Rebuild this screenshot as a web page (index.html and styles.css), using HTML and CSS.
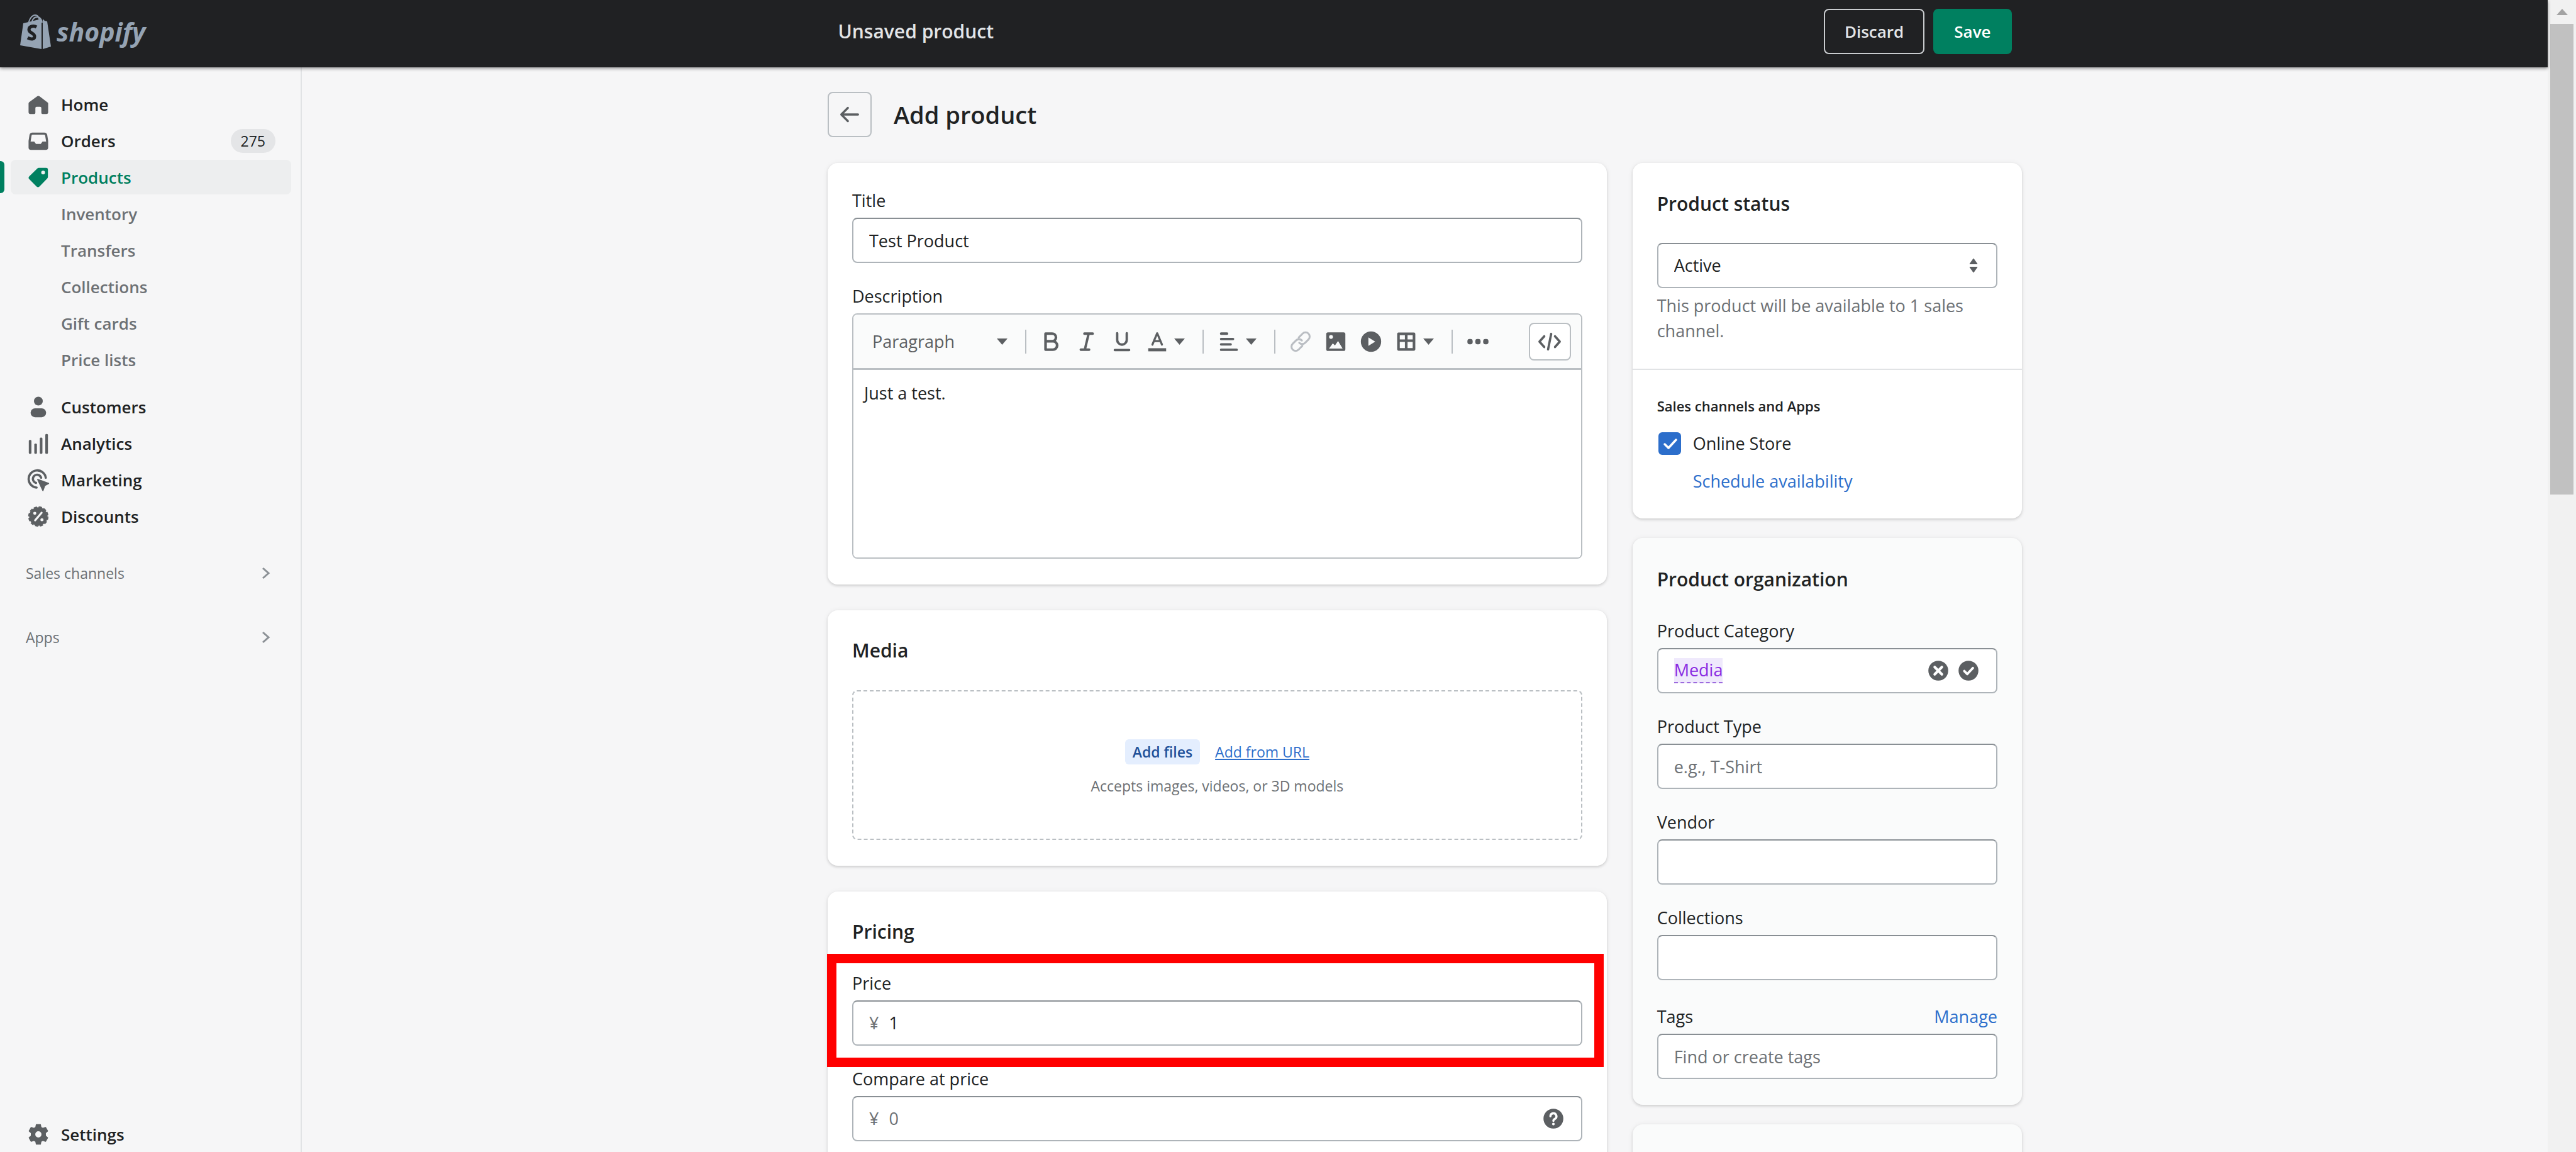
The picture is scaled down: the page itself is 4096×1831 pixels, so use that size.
FILE: index.html
```html
<!DOCTYPE html>
<html lang="en">
<head>
  <meta charset="UTF-8">
  <meta name="viewport" content="width=device-width, initial-scale=1.0">
  <title>Add product</title>
  <link rel="stylesheet" href="styles.css">
</head>
<body>
  <div class="window">
    <div class="app">
      <header class="topbar">
        <a class="logo" href="#">
          <svg class="logo-bag" viewBox="0 0 49 57">
            <path d="M13 19C14 9 19 3 24 3c5 0 7 5 7 14M18 18C19 10 22 6 27 6c4 0 7 3 8 9" fill="none" stroke="#95a3b3" stroke-width="2"/>
            <path d="M5 16 34 9v48L0 51Z" fill="#95a3b3"/>
            <path d="M36 9l3 3 4 1 6 40-13 4Z" fill="#95a3b3"/>
            <path d="M26 22c-5-3-12-1-12 4 0 6 9 5 9 11 0 5-6 5-11 2" fill="none" stroke="#202123" stroke-width="5"/>
          </svg>
          <span class="logo-name">shopify</span>
        </a>
        <div class="topbar-main">
          <div class="topbar-content">
            <h2 class="topbar-title">Unsaved product</h2>
            <div class="topbar-actions">
              <button type="button" class="btn btn-dark">Discard</button>
              <button type="submit" form="product" class="btn btn-primary">Save</button>
            </div>
          </div>
        </div>
      </header>

      <div class="body">
        <nav class="sidebar">
          <ul class="nav">
            <li><a class="nav-item" href="#">
              <svg class="icon" viewBox="0 0 20 20"><path d="M18 8.6 11.3 3.4a2 2 0 0 0-2.6 0L2.4 8a1.5 1.5 0 0 0-.6 1.2V16.500A1.500 1.500 0 0 0 3.300 18H6.500a1 1 0 0 0 1-1V13a1 1 0 0 1 1-1h3a1 1 0 0 1 1 1v4a1 1 0 0 0 1 1h3.200a1.500 1.500 0 0 0 1.500-1.500V9.200Z"/></svg>
              Home</a></li>
            <li><a class="nav-item" href="#">
              <svg class="icon" viewBox="0 0 20 20"><path fill-rule="evenodd" d="M5 3h10a2.500 2.500 0 0 1 2.400 1.900L18.200 10v5.500a2 2 0 0 1-2 2H3.800a2 2 0 0 1-2-2V10l.8-5.100A2.500 2.500 0 0 1 5 3Zm.2 1.700a.9.9 0 0 0-.9.800L3.500 10.500H6.500l1.500 2h4l1.500-2h3l-.8-5a.9.9 0 0 0-.9-.8Z"/></svg>
              Orders <span class="badge">275</span></a></li>
            <li><a class="nav-item active" href="#">
              <svg class="icon" viewBox="0 0 20 20"><path fill-rule="evenodd" d="M10.500 2H16.500A1.500 1.500 0 0 1 18 3.500V9.500a2 2 0 0 1-.6 1.400l-6.500 6.700a1.700 1.700 0 0 1-2.400 0L2.400 11.500a1.700 1.700 0 0 1 0-2.400L9 2.600A2 2 0 0 1 10.500 2ZM14 4.300a1.600 1.600 0 1 0 0 3.200 1.600 1.600 0 0 0 0-3.200Z"/></svg>
              Products</a></li>
            <li><a class="nav-item sub" href="#">Inventory</a></li>
            <li><a class="nav-item sub" href="#">Transfers</a></li>
            <li><a class="nav-item sub" href="#">Collections</a></li>
            <li><a class="nav-item sub" href="#">Gift cards</a></li>
            <li><a class="nav-item sub" href="#">Price lists</a></li>
          </ul>
          <ul class="nav">
            <li><a class="nav-item" href="#">
              <svg class="icon" viewBox="0 0 20 20"><circle cx="10" cy="5" r="3.700"/><rect x="3.500" y="11" width="13" height="7.500" rx="3.700"/></svg>
              Customers</a></li>
            <li><a class="nav-item" href="#">
              <svg class="icon" viewBox="0 0 20 20"><rect x="2" y="7" width="2.200" height="11.500" rx=".8"/><rect x="6.600" y="10" width="2.200" height="8.500" rx=".8"/><rect x="11.200" y="5" width="2.200" height="13.500" rx=".8"/><rect x="15.800" y="2" width="2.200" height="16.500" rx=".8"/></svg>
              Analytics</a></li>
            <li><a class="nav-item" href="#">
              <svg class="icon" viewBox="0 0 20 20"><path d="M16.200 8A7.200 7.200 0 1 0 8.500 16.300M12.300 8A3.500 3.500 0 1 0 8 12.400" fill="none" stroke="currentColor" stroke-width="1.900" stroke-linecap="round"/><path d="M9.500 9.500 18.500 12.800 15.300 14.600 13.800 18.800Z" stroke="currentColor" stroke-linejoin="round"/></svg>
              Marketing</a></li>
            <li><a class="nav-item" href="#">
              <svg class="icon" viewBox="0 0 20 20"><circle cx="10" cy="10" r="7.700"/><circle cx="10" cy="10" r="8" fill="none" stroke="currentColor" stroke-width="1" stroke-dasharray="2.800 1.390"/><path d="M7.300 13.200 12.700 6.800" stroke="#f6f6f7" stroke-width="1.700" stroke-linecap="round"/><circle cx="7" cy="7.300" r="1.300" fill="#f6f6f7"/><circle cx="13" cy="12.700" r="1.300" fill="#f6f6f7"/></svg>
              Discounts</a></li>
          </ul>
          <a class="nav-section" href="#">Sales channels <svg class="chevron" viewBox="0 0 14 20"><path d="M2 2l9 8-9 8"/></svg></a>
          <a class="nav-section" href="#">Apps <svg class="chevron" viewBox="0 0 14 20"><path d="M2 2l9 8-9 8"/></svg></a>
          <a class="nav-item settings" href="#">
            <svg class="icon" viewBox="0 0 20 20"><path fill-rule="evenodd" d="M8.300 1.800h3.400l.5 2.300 1.500.9 2.300-.8 1.700 3-1.800 1.600v2.400l1.800 1.600-1.700 3-2.300-.8-1.500.9-.5 2.300H8.300l-.5-2.300-1.500-.9-2.300.8-1.700-3 1.800-1.600V8.800L2.300 7.200l1.700-3 2.300.8 1.500-.9ZM10 7a3 3 0 1 0 0 6 3 3 0 0 0 0-6Z" stroke="currentColor" stroke-width=".8" stroke-linejoin="round"/></svg>
            Settings</a>
        </nav>

        <main class="main">
          <form class="page" id="product">
            <div class="page-header">
              <button type="button" class="btn-back" aria-label="Back">
                <svg class="icon" viewBox="0 0 20 20"><path d="M17 10H3.500M8.500 4.500 3 10l5.500 5.500" fill="none" stroke="currentColor" stroke-width="1.800" stroke-linecap="round" stroke-linejoin="round"/></svg>
              </button>
              <h1>Add product</h1>
            </div>

            <div class="layout">
              <div class="column">
                <section class="card card-details">
                  <div class="field">
                    <label for="title">Title</label>
                    <input type="text" class="input" id="title" value="Test Product">
                  </div>
                  <div class="field">
                    <label for="description">Description</label>
                    <div class="editor">
                      <div class="toolbar">
                        <div class="format">
                          <select aria-label="Formatting"><option>Paragraph</option></select>
                          <svg class="caret" viewBox="0 0 17 10"><path d="M0 0h17L8.500 10Z"/></svg>
                        </div>
                        <span class="divider"></span>
                        <button type="button" class="tool" aria-label="Bold"><svg class="icon" viewBox="0 0 20 20"><path d="M5 3.300h5.500a3.200 3.200 0 0 1 0 6.400H5Zm0 6.400h6.200a3.500 3.500 0 0 1 0 7H5Z" fill="none" stroke="currentColor" stroke-width="2.200" stroke-linejoin="round"/></svg></button>
                        <button type="button" class="tool" aria-label="Italic"><svg class="icon" viewBox="0 0 20 20"><path d="M8 3.300h7M5 16.700h7M11.600 3.300 8.400 16.700" fill="none" stroke="currentColor" stroke-width="2" stroke-linecap="round"/></svg></button>
                        <button type="button" class="tool" aria-label="Underline"><svg class="icon" viewBox="0 0 20 20"><path d="M6 3v5.500a4 4 0 0 0 8 0V3M4 17h12" fill="none" stroke="currentColor" stroke-width="2" stroke-linecap="round"/></svg></button>
                        <button type="button" class="tool tool-menu" aria-label="Color"><svg class="icon" viewBox="0 0 20 20"><path d="M6 12.500 10 3l4 9.500M7.500 9.500h5" fill="none" stroke="currentColor" stroke-width="1.700" stroke-linecap="round" stroke-linejoin="round"/><rect x="2.500" y="15.500" width="15" height="2.600"/></svg><svg class="caret" viewBox="0 0 17 10"><path d="M0 0h17L8.500 10Z"/></svg></button>
                        <span class="divider"></span>
                        <button type="button" class="tool tool-menu" aria-label="Alignment"><svg class="icon" viewBox="0 0 20 20"><path d="M3.500 3.300h5M3.500 7.800h10M3.500 12.300h8M3.500 16.800h13" stroke="currentColor" stroke-width="2" stroke-linecap="round"/></svg><svg class="caret" viewBox="0 0 17 10"><path d="M0 0h17L8.500 10Z"/></svg></button>
                        <span class="divider"></span>
                        <button type="button" class="tool disabled" aria-label="Link"><svg class="icon" viewBox="0 0 20 20"><path d="m8.500 6.500 3.200-3.200a3.400 3.400 0 0 1 4.900 4.900l-2.800 2.800a3.400 3.400 0 0 1-4.900 0M11.500 13.500l-3.200 3.200a3.400 3.400 0 0 1-4.900-4.900L6.200 9a3.400 3.400 0 0 1 4.900 0" fill="none" stroke="currentColor" stroke-width="1.600" stroke-linecap="round"/></svg></button>
                        <button type="button" class="tool" aria-label="Image"><svg class="icon" viewBox="0 0 20 20"><path fill-rule="evenodd" d="M3.500 2.200h13A1.500 1.500 0 0 1 18 3.700v12.600a1.500 1.500 0 0 1-1.500 1.500h-13A1.500 1.500 0 0 1 2 16.300V3.700a1.500 1.500 0 0 1 1.500-1.500ZM6 4.500a1.600 1.600 0 1 0 0 3.200 1.600 1.600 0 0 0 0-3.200ZM4.300 15.800h11.400l-3.800-6.300-2.600 3.700L7.500 11.500Z"/></svg></button>
                        <button type="button" class="tool" aria-label="Video"><svg class="icon" viewBox="0 0 20 20"><path fill-rule="evenodd" d="M10 1.500a8.500 8.500 0 1 0 0 17 8.500 8.500 0 0 0 0-17ZM7.800 6.500v7l5.700-3.500Z"/></svg></button>
                        <button type="button" class="tool tool-menu" aria-label="Table"><svg class="icon" viewBox="0 0 20 20"><path d="M3.500 3.500h13v13h-13ZM10 3.500v13M3.500 9.200h13" fill="none" stroke="currentColor" stroke-width="2.200" stroke-linejoin="round"/></svg><svg class="caret" viewBox="0 0 17 10"><path d="M0 0h17L8.500 10Z"/></svg></button>
                        <span class="divider"></span>
                        <button type="button" class="tool" aria-label="More"><svg class="icon" viewBox="0 0 20 20"><rect x="1.200" y="7.800" width="4.400" height="4.400" rx="1.800"/><rect x="7.800" y="7.800" width="4.400" height="4.400" rx="1.800"/><rect x="14.400" y="7.800" width="4.400" height="4.400" rx="1.800"/></svg></button>
                        <button type="button" class="btn-code" aria-label="Show HTML"><svg class="icon" viewBox="0 0 20 20"><path d="M5.500 5.500 1.500 10l4 4.500M14.500 5.500l4 4.500-4 4.500M11.300 3.500 8.700 16.500" fill="none" stroke="currentColor" stroke-width="1.900" stroke-linecap="round" stroke-linejoin="round"/></svg></button>
                      </div>
                      <textarea id="description">Just a test.</textarea>
                    </div>
                  </div>
                </section>

                <section class="card">
                  <h2>Media</h2>
                  <div class="dropzone">
                    <div class="dropzone-actions">
                      <button type="button" class="btn-files">Add files</button>
                      <a class="link-url" href="#">Add from URL</a>
                    </div>
                    <p>Accepts images, videos, or 3D models</p>
                  </div>
                </section>

                <section class="card">
                  <h2>Pricing</h2>
                  <div class="field highlight">
                    <label for="price">Price</label>
                    <div class="input input-group">
                      <span class="prefix">¥</span>
                      <input type="text" id="price" value="1">
                    </div>
                  </div>
                  <div class="field">
                    <label for="compare">Compare at price</label>
                    <div class="input input-group">
                      <span class="prefix">¥</span>
                      <input type="text" id="compare" placeholder="0">
                      <svg class="icon" viewBox="0 0 20 20"><circle cx="10" cy="10" r="8.300"/><path d="M7.500 8a2.500 2.500 0 1 1 3.700 2.200c-.8.400-1.200.8-1.200 1.600" fill="none" stroke="#fff" stroke-width="1.800" stroke-linecap="round"/><circle cx="10" cy="14.500" r="1.100" fill="#fff"/></svg>
                    </div>
                  </div>
                </section>
              </div>

              <div class="column column-side">
                <section class="card card-status">
                  <div class="card-section">
                    <h2>Product status</h2>
                    <div class="select">
                      <select class="input" aria-label="Product status"><option>Active</option></select>
                      <svg class="select-icon" viewBox="0 0 14 22"><path d="M7 0l6 8.500H1ZM7 22 1 13.500h12Z" stroke="currentColor" stroke-linejoin="round"/></svg>
                    </div>
                    <p class="help">This product will be available to 1 sales channel.</p>
                  </div>
                  <div class="card-section channels">
                    <h3>Sales channels and Apps</h3>
                    <label class="check"><input type="checkbox" checked> Online Store</label>
                    <a class="link" href="#">Schedule availability</a>
                  </div>
                </section>

                <section class="card card-subdued">
                  <h2>Product organization</h2>
                  <div class="field">
                    <label for="category">Product Category</label>
                    <div class="input input-group">
                      <span class="token" id="category" role="textbox" tabindex="0">Media</span>
                      <svg class="icon" viewBox="0 0 20 20"><circle cx="10" cy="10" r="8.300"/><path d="m7 7 6 6M13 7l-6 6" stroke="#fff" stroke-width="2.200" stroke-linecap="round"/></svg>
                      <svg class="icon" viewBox="0 0 20 20"><circle cx="10" cy="10" r="8.300"/><path d="m6.500 10.300 2.500 2.500 4.700-5" fill="none" stroke="#fff" stroke-width="2" stroke-linecap="round" stroke-linejoin="round"/></svg>
                    </div>
                  </div>
                  <div class="field">
                    <label for="type">Product Type</label>
                    <input type="text" class="input" id="type" placeholder="e.g., T-Shirt">
                  </div>
                  <div class="field">
                    <label for="vendor">Vendor</label>
                    <input type="text" class="input" id="vendor">
                  </div>
                  <div class="field">
                    <label for="collections">Collections</label>
                    <input type="text" class="input" id="collections">
                  </div>
                  <div class="field field-tags">
                    <div class="label-row">
                      <label for="tags">Tags</label>
                      <a class="link" href="#">Manage</a>
                    </div>
                    <input type="text" class="input" id="tags" placeholder="Find or create tags">
                  </div>
                </section>

                <section class="card card-subdued"></section>
              </div>
            </div>
          </form>
        </main>
      </div>
    </div>

    <div class="scrollbar">
      <svg class="scroll-arrow" viewBox="0 0 18 10"><path d="M0 10h18L9 0Z"/></svg>
      <div class="scroll-thumb"></div>
    </div>
  </div>
</body>
</html>
```
FILE: styles.css
```css
* {
  box-sizing: border-box;
}
body {
  margin: 0;
  font-family: "Open Sans", "Noto Sans", sans-serif;
  font-size: 27px;
  line-height: 38px;
  color: #202223;
  background-color: #f6f6f7;
}
h1, h2, h3, p, ul {
  margin: 0;
  padding: 0;
}
h2 {
  font-size: 30px;
  font-weight: 600;
}
button, input, select, textarea {
  font: inherit;
  color: inherit;
}
button {
  padding: 0;
  cursor: pointer;
}
a {
  color: #2c6ecb;
  text-decoration: none;
}
svg {
  display: block;
  flex: none;
  fill: currentColor;
}
.icon {
  width: 38px;
  height: 38px;
  color: #5c5f62;
}
.window {
  display: grid;
  grid-template-columns: minmax(0, 1fr) 45px;
  height: 100vh;
  overflow: hidden;
}
.app {
  display: flex;
  flex-direction: column;
  min-height: 0;
}

/* Top bar */
.topbar {
  display: flex;
  flex: none;
  height: 107px;
  background-color: #202123;
  box-shadow: 0 2px 5px rgba(0, 0, 0, 0.4);
  z-index: 1;
}
.logo {
  display: flex;
  align-items: center;
  gap: 9px;
  width: 480px;
  padding: 0 0 8px 32px;
  color: #95a3b3;
}
.logo-bag {
  width: 49px;
  height: 57px;
}
.logo-name {
  font-size: 41px;
  font-weight: 700;
  font-style: italic;
}
.topbar-main {
  flex: 1;
  padding: 0 16px;
}
.topbar-content {
  display: flex;
  justify-content: space-between;
  align-items: center;
  max-width: 1866px;
  height: 99px;
  margin: 0 auto;
  color: #e3e5e7;
}
.topbar-actions {
  display: flex;
  gap: 14px;
}
.btn {
  height: 72px;
  padding: 0 31px;
  border: 2px solid #c9cccf;
  border-radius: 8px;
  font-size: 26px;
  font-weight: 600;
}
.btn-dark {
  background-color: transparent;
  color: #e3e5e7;
}
.btn-primary {
  border-color: #008060;
  background-color: #008060;
  color: #fff;
}

/* Sidebar */
.body {
  display: flex;
  flex: 1;
  min-height: 0;
}
.sidebar {
  display: flex;
  flex-direction: column;
  flex: none;
  width: 480px;
  padding: 31px 0 1px;
  border-right: 2px solid #e1e3e5;
}
.nav {
  display: flex;
  flex-direction: column;
  gap: 3px;
  list-style: none;
  margin-bottom: 20px;
}
.nav + .nav {
  margin-bottom: 12px;
}
.nav-item {
  display: flex;
  align-items: center;
  gap: 17px;
  position: relative;
  height: 55px;
  margin: 0 15px 0 17px;
  padding: 0 25px;
  border-radius: 8px;
  font-size: 26px;
  font-weight: 600;
  color: #202223;
}
.nav-item.active {
  background-color: #edeeef;
  color: #008060;
}
.nav-item.active .icon {
  color: #008060;
}
.nav-item.active::before {
  content: "";
  position: absolute;
  left: -17px;
  top: 2px;
  width: 7px;
  height: 51px;
  border-radius: 0 6px 6px 0;
  background-color: #008060;
}
.nav-item.sub {
  padding-left: 80px;
  color: #6d7175;
}
.badge {
  margin-left: auto;
  padding: 0 16px;
  border-radius: 19px;
  background-color: #e4e5e7;
  font-size: 23px;
  font-weight: 400;
}
.nav-section {
  display: flex;
  justify-content: space-between;
  align-items: center;
  height: 102px;
  padding: 0 48px 0 41px;
  font-size: 23px;
  color: #6d7175;
}
.nav-section .chevron {
  width: 14px;
  height: 20px;
  fill: none;
  stroke: #8c9196;
  stroke-width: 3;
}
.settings {
  margin-top: auto;
}

/* Page */
.main {
  flex: 1;
  min-width: 0;
  overflow: hidden;
}
.page {
  max-width: 1899px;
  margin: 0 auto;
  padding-top: 39px;
}
.page-header {
  display: flex;
  align-items: center;
  gap: 35px;
  margin-bottom: 41px;
}
.page-header h1 {
  font-size: 38px;
  font-weight: 600;
}
.btn-back {
  display: flex;
  justify-content: center;
  align-items: center;
  width: 70px;
  height: 72px;
  border: 2px solid #babfc3;
  border-radius: 8px;
  background: none;
}
.layout {
  display: grid;
  grid-template-columns: 2fr 1fr;
  gap: 41px;
}
.column {
  display: flex;
  flex-direction: column;
  gap: 41px;
  min-width: 0;
}
.column-side {
  gap: 31px;
}
.card {
  display: flex;
  flex-direction: column;
  gap: 34px;
  padding: 45px 39px 41px;
  border-radius: 16px;
  background-color: #fff;
  box-shadow: 0 0 10px rgba(23, 24, 24, 0.05), 0 2px 4px rgba(0, 0, 0, 0.15);
}
.card > h2 {
  margin-bottom: 10px;
}
.card-details {
  padding-top: 41px;
}
.card-subdued {
  padding-top: 47px;
  background-color: #fafbfb;
  min-height: 120px;
}

/* Fields */
.field {
  display: flex;
  flex-direction: column;
  gap: 8px;
}
.field-tags {
  margin-top: 5px;
}
.input {
  width: 100%;
  height: 72px;
  padding: 0 25px;
  border: 2px solid #aeb4b9;
  border-top-color: #898f94;
  border-radius: 8px;
  background-color: #fff;
}
.input::placeholder,
.input-group input::placeholder {
  color: #6d7175;
  opacity: 1;
}
.input-group {
  display: flex;
  align-items: center;
  gap: 10px;
}
.input-group input {
  flex: 1;
  min-width: 0;
  border: none;
  background: none;
  outline: none;
}
.prefix {
  padding-right: 4px;
  color: #6d7175;
}
.highlight {
  position: relative;
}
.highlight::after {
  content: "";
  position: absolute;
  top: -28px;
  right: -34px;
  bottom: -34px;
  left: -40px;
  border: 15px solid #f00;
  pointer-events: none;
}
.label-row {
  display: flex;
  justify-content: space-between;
}

/* Description editor */
.editor {
  border: 2px solid #babfc3;
  border-radius: 8px;
  overflow: hidden;
}
.toolbar {
  display: flex;
  align-items: center;
  height: 88px;
  padding-right: 16px;
  border-bottom: 3px solid #babfc3;
  background-color: #fafbfb;
}
.format,
.select {
  display: grid;
  align-items: center;
}
.format > *,
.select > * {
  grid-area: 1 / 1;
}
.format {
  width: 261px;
  color: #5c5f62;
}
.format select {
  appearance: none;
  width: 100%;
  padding: 0 30px;
  border: none;
  background: none;
}
.format .caret {
  justify-self: end;
  margin-right: 16px;
  pointer-events: none;
}
.caret {
  width: 17px;
  height: 10px;
  color: #5c5f62;
}
.divider {
  width: 2px;
  height: 38px;
  margin: 0 12px;
  background-color: #babfc3;
}
.tool {
  display: flex;
  align-items: center;
  gap: 8px;
  height: 56px;
  padding: 0 9px;
  border: none;
  background: none;
}
.tool-menu {
  padding-right: 16px;
}
.tool.disabled .icon {
  color: #babec3;
}
.btn-code {
  display: flex;
  justify-content: center;
  align-items: center;
  width: 67px;
  height: 60px;
  margin-left: auto;
  border: 2px solid #babfc3;
  border-radius: 8px;
  background-color: #fff;
}
.editor textarea {
  display: block;
  width: 100%;
  height: 298px;
  padding: 18px 17px;
  border: none;
  outline: none;
  resize: none;
}

/* Media */
.dropzone {
  display: flex;
  flex-direction: column;
  justify-content: center;
  align-items: center;
  gap: 15px;
  height: 238px;
  padding-top: 10px;
  border: 2px dashed #babfc3;
  border-radius: 8px;
  font-size: 23px;
  color: #6d7175;
}
.dropzone-actions {
  display: flex;
  align-items: center;
  gap: 24px;
}
.btn-files {
  height: 40px;
  padding: 0 12px;
  border: none;
  border-radius: 6px;
  background-color: #e4eefe;
  font-weight: 600;
  color: #1f5199;
}
.link-url {
  text-decoration: underline;
}

/* Status */
.card-status {
  gap: 0;
  padding: 0;
}
.card-section {
  padding: 46px 39px 40px;
}
.select {
  margin: 43px 0 8px;
}
.select .input {
  appearance: none;
}
.select-icon {
  justify-self: end;
  width: 14px;
  height: 22px;
  margin-right: 31px;
  color: #5c5f62;
  pointer-events: none;
}
.help {
  line-height: 40px;
  color: #6d7175;
}
.channels {
  display: flex;
  flex-direction: column;
  padding-top: 38px;
  border-top: 2px solid #e1e3e5;
}
.channels h3 {
  font-size: 22px;
  font-weight: 600;
}
.check {
  display: flex;
  align-items: center;
  gap: 19px;
  margin: 22px 0;
}
.check input {
  appearance: none;
  width: 36px;
  height: 36px;
  margin: 0 0 0 2px;
  border-radius: 6px;
  background: #2c6ecb url("data:image/svg+xml,%3Csvg xmlns='http://www.w3.org/2000/svg' viewBox='0 0 36 36'%3E%3Cpath d='M10 19l6 6 12-13' fill='none' stroke='%23fff' stroke-width='3.500' stroke-linecap='round' stroke-linejoin='round'/%3E%3C/svg%3E");
}
.channels .link {
  padding-left: 57px;
}
.token {
  margin-right: auto;
  border-bottom: 2px dashed #9c6ade;
  background-color: #efe9fc;
  color: #8a2be2;
}

/* Scrollbar */
.scrollbar {
  display: flex;
  flex-direction: column;
  align-items: center;
  gap: 14px;
  padding-top: 14px;
  background-color: #f1f1f1;
}
.scroll-arrow {
  width: 18px;
  height: 10px;
  color: #a3a3a3;
}
.scroll-thumb {
  width: 37px;
  height: 748px;
  background-color: #c1c1c1;
}
```
